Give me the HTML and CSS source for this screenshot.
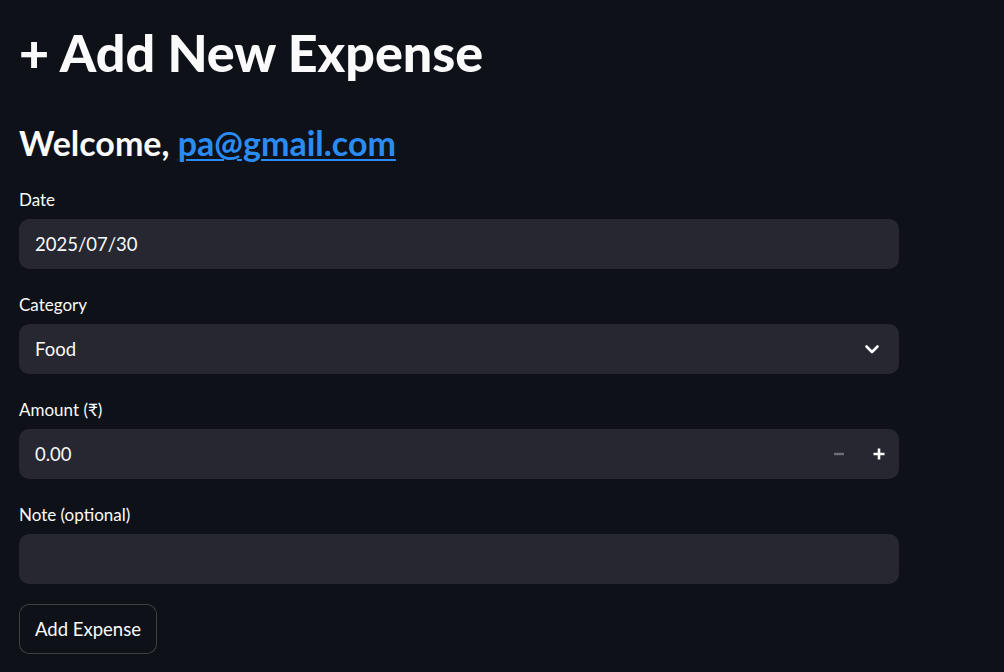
FILE: index.html
```html
<!DOCTYPE html>
<html lang="en">
<head>
<meta charset="utf-8">
<title>Add New Expense</title>
<link rel="stylesheet" href="styles.css">
</head>
<body>
<main class="page">
  <h1 class="title">+ Add New Expense</h1>
  <h3 class="welcome">Welcome, <a href="#" class="link">pa@gmail.com</a></h3>

  <div class="field">
    <label class="label">Date</label>
    <div class="input"><span class="value">2025/07/30</span></div>
  </div>

  <div class="field">
    <label class="label">Category</label>
    <div class="input">
      <span class="value">Food</span>
      <svg class="chevron" width="16" height="16" viewBox="0 0 16 16"><path d="M2.5 5.5 L8 11 L13.5 5.5" fill="none" stroke="#fafafa" stroke-width="2.6" stroke-linecap="round" stroke-linejoin="round"/></svg>
    </div>
  </div>

  <div class="field">
    <label class="label">Amount (₹)</label>
    <div class="input">
      <span class="value">0.00</span>
      <div class="steppers">
        <span class="step minus"><svg width="12" height="12" viewBox="0 0 12 12"><path d="M1 6 H11" stroke="#6c6e78" stroke-width="2.4"/></svg></span>
        <span class="step plus"><svg width="12" height="12" viewBox="0 0 12 12"><path d="M0.5 6 H11.5 M6 0.5 V11.5" stroke="#fafafa" stroke-width="2.6"/></svg></span>
      </div>
    </div>
  </div>

  <div class="field last">
    <label class="label">Note (optional)</label>
    <div class="input"></div>
  </div>

  <button class="btn" type="button">Add Expense</button>
</main>
</body>
</html>
```

FILE: styles.css
```css
html, body {
  margin: 0;
  padding: 0;
  background: #0e1117;
  color: #fafafa;
  font-family: "Lato", "Noto Sans", sans-serif;
}

.page {
  padding: 0 19px;
  width: 880px;
}

.title {
  margin: 0;
  padding-top: 19px;
  font-size: 52px;
  line-height: 66px;
  font-weight: 900;
  color: #fafafa;
}

.welcome {
  margin: 38px 0 0;
  font-size: 34px;
  line-height: 40px;
  font-weight: 700;
  color: #fafafa;
}

.link {
  color: #2a8cf2;
  text-decoration: underline;
  text-decoration-thickness: 2px;
  text-underline-offset: 3px;
}

.field {
  display: flex;
  flex-direction: column;
  gap: 8px;
  margin-top: 26px;
}

.field + .field {
  margin-top: 25px;
}

.label {
  font-size: 17px;
  line-height: 22px;
  color: #fafafa;
}

.input {
  height: 50px;
  background: #262730;
  border-radius: 10px;
  display: flex;
  align-items: center;
  padding: 0 19px 0 16px;
  box-sizing: border-box;
}

.value {
  flex: 1;
  font-size: 18.5px;
  color: #fafafa;
  padding-bottom: 1px;
}

.chevron {
  display: block;
}

.steppers {
  display: flex;
  margin-right: -19px;
}

.step {
  width: 40px;
  height: 50px;
  display: flex;
  align-items: center;
  justify-content: center;
}

.btn {
  margin-top: 20px;
  height: 50px;
  padding: 0 15px;
  background: #0e1117;
  border: 1px solid rgba(250, 250, 250, 0.2);
  border-radius: 10px;
  color: #fafafa;
  font-family: "Lato", "Noto Sans", sans-serif;
  font-size: 18.5px;
}
```
